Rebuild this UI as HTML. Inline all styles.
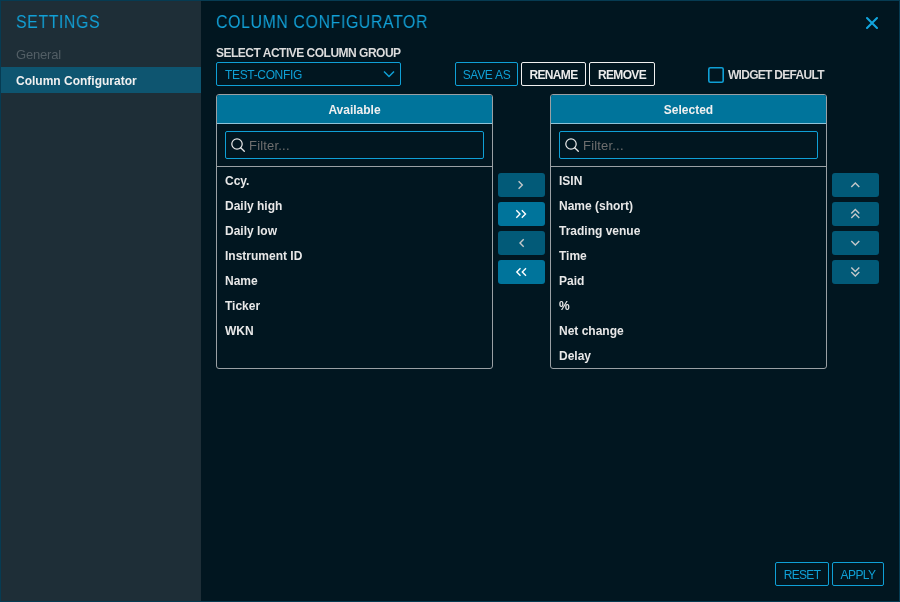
<!DOCTYPE html>
<html><head><meta charset="utf-8">
<style>
*{margin:0;padding:0;box-sizing:border-box}
html,body{width:900px;height:602px;overflow:hidden;background:#063b52;font-family:"Liberation Sans",sans-serif}
.frame{position:absolute;left:0;top:0;width:900px;height:602px;border:1px solid #063b52;background:#011620}
.side{position:absolute;left:1px;top:1px;width:200px;height:600px;background:#1e2e37}
.abs{position:absolute;white-space:nowrap}
body>*{will-change:transform}
.title{font-size:18px;color:#12a0d6;line-height:1}
.nav{font-size:13px;line-height:1}
.active{position:absolute;left:1px;top:67px;width:200px;height:26px;background:#0e5570}
.lbl{font-size:12px;font-weight:bold;color:#dcdcdc;line-height:1}
.dd{position:absolute;left:216px;top:62px;width:185px;height:24px;border:1px solid #0fa0d6;border-radius:2px}
.btn{position:absolute;top:62px;height:24px;border:1px solid #f0f0f0;border-radius:2px;font-size:12px;line-height:24px;text-align:center;color:#ebebeb;font-weight:bold}
.btn.cy{border-color:#0fa0d6;color:#0fa0d6;font-weight:normal}
.cb{position:absolute;left:708px;top:67px;width:16px;height:16px;border:2px solid #0fa0d6;border-radius:2px}
.panel{position:absolute;top:94px;width:277px;height:275px;border:1px solid #9aa0a4;border-radius:3px;overflow:hidden}
.ph{position:absolute;left:0;top:0;right:0;height:29px;background:#00749b;border-bottom:1px solid #8fc3d8;color:#f0f0f0;font-weight:bold;font-size:12px;text-align:center;line-height:31px}
.filter{position:absolute;left:8px;top:36px;width:259px;height:28px;border:1px solid #0fa0d6;border-radius:2px}
.sep{position:absolute;left:0;right:0;top:71px;height:1px;background:#9aa0a4}
.items{position:absolute;left:8px;top:74px}
.it{height:25px;font-size:12px;font-weight:bold;color:#e8e8e8;line-height:25px}
.ab{position:absolute;width:47px;height:24px;border-radius:3px;background:#025a78}
.ab.on{background:#00749b}
.ab svg{position:absolute;left:0;top:0}
</style></head><body>
<div class="frame"></div>
<div class="side"></div>
<div class="active"></div>
<div class="abs title" style="left:16px;top:13px;letter-spacing:0.71px;transform:scaleX(0.88);transform-origin:0 0">SETTINGS</div>
<div class="abs nav" style="left:16px;top:48px;color:#525e65;letter-spacing:-0.2px">General</div>
<div class="abs nav" style="left:16px;top:75px;font-size:12px;color:#f0f0f0;font-weight:bold">Column Configurator</div>

<div class="abs title" style="left:216px;top:13px;letter-spacing:0.72px;transform:scaleX(0.88);transform-origin:0 0">COLUMN CONFIGURATOR</div>
<svg class="abs" style="left:864px;top:15px" width="16" height="16" viewBox="0 0 16 16"><path d="M3 3L13 13M13 3L3 13" stroke="#12a5dd" stroke-width="2.1" stroke-linecap="round"/></svg>

<div class="abs lbl" style="left:216px;top:47px;letter-spacing:-0.5px">SELECT ACTIVE COLUMN GROUP</div>
<div class="dd"></div>
<div class="abs" style="left:225px;top:69px;font-size:12px;color:#0fa0d6;line-height:1;letter-spacing:-0.34px">TEST-CONFIG</div>
<svg class="abs" style="left:382px;top:68px" width="14" height="12" viewBox="0 0 14 12"><path d="M2 3.5L7 8.5L12 3.5" stroke="#0fa0d6" stroke-width="1.5" fill="none"/></svg>

<div class="btn cy" style="left:455px;width:63px;letter-spacing:-0.3px">SAVE AS</div>
<div class="btn" style="left:521px;width:65px;letter-spacing:-0.68px">RENAME</div>
<div class="btn" style="left:589px;width:66px;letter-spacing:-0.64px">REMOVE</div>
<svg class="abs" style="left:708px;top:67px" width="16" height="16" viewBox="0 0 16 16"><rect x="0.8" y="0.8" width="14.4" height="14.4" rx="1.5" stroke="#0fa0d6" stroke-width="1.6" fill="none"/></svg>
<div class="abs lbl" style="left:728px;top:69px;letter-spacing:-0.71px">WIDGET DEFAULT</div>

<div class="panel" style="left:216px">
  <div class="ph">Available</div>
  <div class="filter"><svg style="position:absolute;left:5px;top:6px" width="16" height="16" viewBox="0 0 16 16"><circle cx="6" cy="6" r="5.2" stroke="#e6e6e6" stroke-width="1.25" fill="none"/><path d="M9.7 9.7L13.3 13.3" stroke="#e6e6e6" stroke-width="1.3" stroke-linecap="round"/></svg><span style="position:absolute;left:23px;top:7px;font-size:13px;color:#6e6e6e;line-height:1;letter-spacing:0.19px">Filter...</span></div>
  <div class="sep"></div>
  <div class="items">
    <div class="it">Ccy.</div><div class="it">Daily high</div><div class="it">Daily low</div><div class="it">Instrument ID</div><div class="it">Name</div><div class="it">Ticker</div><div class="it">WKN</div>
  </div>
</div>
<div class="panel" style="left:550px">
  <div class="ph">Selected</div>
  <div class="filter"><svg style="position:absolute;left:5px;top:6px" width="16" height="16" viewBox="0 0 16 16"><circle cx="6" cy="6" r="5.2" stroke="#e6e6e6" stroke-width="1.25" fill="none"/><path d="M9.7 9.7L13.3 13.3" stroke="#e6e6e6" stroke-width="1.3" stroke-linecap="round"/></svg><span style="position:absolute;left:23px;top:7px;font-size:13px;color:#6e6e6e;line-height:1;letter-spacing:0.19px">Filter...</span></div>
  <div class="sep"></div>
  <div class="items">
    <div class="it">ISIN</div><div class="it">Name (short)</div><div class="it">Trading venue</div><div class="it">Time</div><div class="it">Paid</div><div class="it">%</div><div class="it">Net change</div><div class="it">Delay</div>
  </div>
</div>

<div class="ab" style="left:498px;top:173px"><svg width="47" height="24" viewBox="0 0 47 24"><path d="M20.6 8.3L24.3 12L20.6 15.7" stroke="#c4c8ca" stroke-width="1.4" fill="none"/></svg></div>
<div class="ab on" style="left:498px;top:202px"><svg width="47" height="24" viewBox="0 0 47 24"><path d="M18.3 8.3L22 12L18.3 15.7M23.8 8.3L27.5 12L23.8 15.7" stroke="#ffffff" stroke-width="1.4" fill="none"/></svg></div>
<div class="ab" style="left:498px;top:231px"><svg width="47" height="24" viewBox="0 0 47 24"><path d="M25.7 8.3L22 12L25.7 15.7" stroke="#c4c8ca" stroke-width="1.4" fill="none"/></svg></div>
<div class="ab on" style="left:498px;top:260px"><svg width="47" height="24" viewBox="0 0 47 24"><path d="M22.5 8.3L18.8 12L22.5 15.7M28 8.3L24.3 12L28 15.7" stroke="#ffffff" stroke-width="1.4" fill="none"/></svg></div>

<div class="ab" style="left:832px;top:173px"><svg width="47" height="24" viewBox="0 0 47 24"><path d="M19.3 14L23.3 10L27.3 14" stroke="#c4c8ca" stroke-width="1.4" fill="none"/></svg></div>
<div class="ab" style="left:832px;top:202px"><svg width="47" height="24" viewBox="0 0 47 24"><path d="M19.3 11.5L23.3 7.5L27.3 11.5M19.3 16L23.3 12L27.3 16" stroke="#c4c8ca" stroke-width="1.4" fill="none"/></svg></div>
<div class="ab" style="left:832px;top:231px"><svg width="47" height="24" viewBox="0 0 47 24"><path d="M19.3 10L23.3 14L27.3 10" stroke="#c4c8ca" stroke-width="1.4" fill="none"/></svg></div>
<div class="ab" style="left:832px;top:260px"><svg width="47" height="24" viewBox="0 0 47 24"><path d="M19.3 7.5L23.3 11.5L27.3 7.5M19.3 12L23.3 16L27.3 12" stroke="#c4c8ca" stroke-width="1.4" fill="none"/></svg></div>

<div class="btn cy" style="left:775px;top:562px;width:54px;letter-spacing:-0.68px">RESET</div>
<div class="btn cy" style="left:832px;top:562px;width:52px;letter-spacing:-0.6px">APPLY</div>
</body></html>
